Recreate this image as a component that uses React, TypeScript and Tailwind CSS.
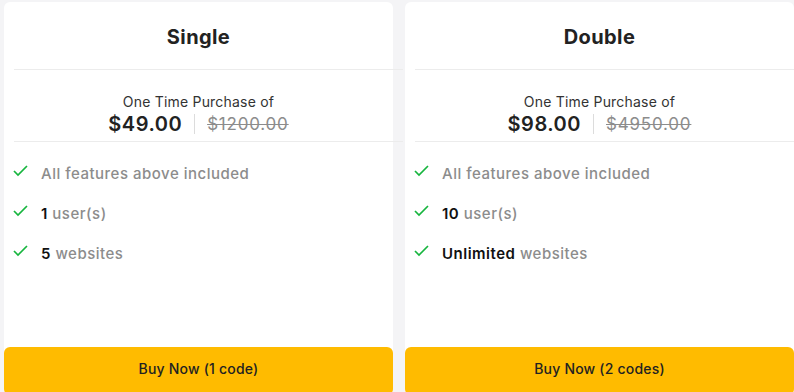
import { ReactNode } from "react";

type Plan = {
  name: string;
  price: string;
  was: string;
  users: string;
  sites: string;
  button: string;
};

const plans: Plan[] = [
  { name: "Single", price: "$49.00", was: "$1200.00", users: "1", sites: "5", button: "Buy Now (1 code)" },
  { name: "Double", price: "$98.00", was: "$4950.00", users: "10", sites: "Unlimited", button: "Buy Now (2 codes)" },
];

function Check() {
  return (
    <svg width="15" height="12" viewBox="0 0 15 12" className="shrink-0 mt-[-7px]">
      <polyline points="1,6 5,10 14,1" fill="none" stroke="#16b53e" strokeWidth="1.7" />
    </svg>
  );
}

function Feature({ children }: { children: ReactNode }) {
  return (
    <li className="flex items-center h-10">
      <div className="w-[37px] pl-[9px] flex items-center">
        <Check />
      </div>
      <span className="text-[15px] tracking-[0.5px] text-[#8c8c8c] font-medium">{children}</span>
    </li>
  );
}

function Card({ plan }: { plan: Plan }) {
  return (
    <div className="w-[389px] shrink-0 bg-white rounded-md flex flex-col">
      {/* header */}
      <div className="h-[67px] flex items-center justify-center">
        <h2 className="text-[20px] tracking-[0.4px] font-bold text-[#222] pt-[3px]">{plan.name}</h2>
      </div>
      <div className="ml-[10px] w-full h-px bg-[#ececec]" />

      {/* price */}
      <div className="h-[71px] flex flex-col items-center justify-center pt-[16px]">
        <p className="text-[14px] tracking-[0.2px] text-[#333] leading-5">One Time Purchase of</p>
        <div className="flex items-center leading-[22px] mt-[1px]">
          <span className="text-[20px] tracking-[0.5px] font-semibold text-[#222]">{plan.price}</span>
          <span className="mx-[12px] w-px h-5 bg-[#dcdcdc]" />
          <span className="text-[17px] tracking-[0.8px] text-[#8c8c8c] line-through">{plan.was}</span>
        </div>
      </div>
      <div className="ml-[10px] w-full h-px bg-[#ececec]" />

      {/* features */}
      <ul className="pt-[12px]">
        <Feature>All features above included</Feature>
        <Feature>
          <b className="font-semibold text-[#111]">{plan.users}</b> user(s)
        </Feature>
        <Feature>
          <b className="font-semibold text-[#111]">{plan.sites}</b> websites
        </Feature>
      </ul>

      <div className="flex-1" />
      <button className="h-12 w-full rounded-md bg-[#ffbb00] text-[14px] tracking-[0.2px] font-medium text-[#222] pb-[6px]">
        {plan.button}
      </button>
    </div>
  );
}

export default function App() {
  return (
    <div
      className="h-[392px] overflow-hidden bg-[#f4f4f6] flex gap-3 pl-1 pt-[2px]"
      style={{ fontFamily: "Inter, 'Open Sans', sans-serif" }}
    >
      <div className="flex gap-3 h-[393px] shrink-0">
        {plans.map((p) => (
          <Card key={p.name} plan={p} />
        ))}
      </div>
    </div>
  );
}
